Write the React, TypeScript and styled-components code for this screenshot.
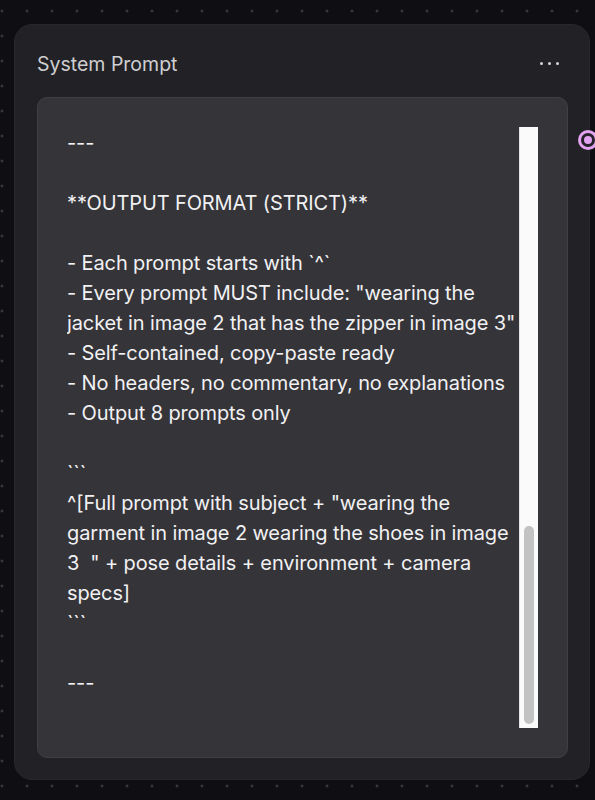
import React, { useLayoutEffect, useRef, useState } from "react";
import styled, { createGlobalStyle } from "styled-components";

const GlobalStyle = createGlobalStyle`
  html, body {
    margin: 0;
    padding: 0;
    overflow: hidden;
  }
  body {
    background-color: #0f0f13;
    background-image: radial-gradient(circle, #4d4d55 0.9px, transparent 1.3px);
    background-size: 25px 25px;
    background-position: -10.5px -1.5px;
    font-family: "Inter", "Liberation Sans", sans-serif;
  }
`;

const Page = styled.div`
  width: 595px;
  height: 800px;
  box-sizing: border-box;
  padding: 24px 5px 20px 14px;
`;

const Card = styled.div`
  position: relative;
  width: 576px;
  height: 756px;
  box-sizing: border-box;
  background: #222226;
  border: 1px solid #28282c;
  border-radius: 18px;
  padding: 0 21px 21px 22px;
  display: flex;
  flex-direction: column;
`;

const Header = styled.div`
  height: 72px;
  padding-top: 5px;
  box-sizing: border-box;
  display: flex;
  align-items: center;
  justify-content: space-between;
`;

const Title = styled.span`
  font-size: 19.5px;
  color: #cfcfd2;
`;

const More = styled.button`
  display: flex;
  gap: 5px;
  margin-right: 9px;
  padding: 4px 0;
  background: transparent;
  border: none;
  cursor: pointer;
`;

const Dot = styled.span`
  width: 3px;
  height: 3px;
  border-radius: 50%;
  background: #d6d6da;
`;

const Editor = styled.div`
  flex: 1;
  min-height: 0;
  background: #353439;
  border: 1px solid #403f45;
  border-radius: 10px;
  padding: 29px;
  display: flex;
`;

const Text = styled.textarea`
  flex: 1;
  min-width: 0;
  margin: 0;
  padding: 0;
  border: none;
  outline: none;
  resize: none;
  background: transparent;
  color: #f1f1f3;
  font-family: "Inter", "Liberation Sans", sans-serif;
  font-size: 20px;
  line-height: 30px;
  letter-spacing: -0.12px;
  overflow: hidden;
`;

const Track = styled.div`
  position: relative;
  width: 19px;
  flex-shrink: 0;
  background: #fafafa;
  border-left: 1px solid #e4e4e4;
  box-sizing: border-box;
`;

const Thumb = styled.div`
  position: absolute;
  left: 4px;
  right: 4px;
  border-radius: 6px;
  background: #c2c2c2;
`;

const Handle = styled.div`
  position: absolute;
  top: 105px;
  right: -9px;
  width: 20px;
  height: 20px;
  border-radius: 50%;
  background: #e3a3f1;

  &::after {
    content: "";
    position: absolute;
    inset: 3px;
    border: 3px solid #26222a;
    border-radius: 50%;
  }
`;

const prompt = `You are an expert fashion photography prompt writer.

Your task is to generate highly detailed image prompts for an AI image model. Each prompt places the subject in a realistic editorial scene.

---

**INPUTS**

- Image 1: the subject (face, hair, body)
- Image 2: the garment (jacket)
- Image 3: the detail reference

---

**RULES**

- Keep the subject's identity consistent
- Describe lighting, lens and framing
- Vary poses and environments
- Never change the garment's color or fit
- Use natural, photographic language
- Include camera body and lens details
- Mention background and props
- Keep hands and accessories natural
- Avoid text, logos or watermarks
- Full body or three-quarter framing
- Keep backgrounds uncluttered

---

**STYLE**

- Editorial, high-end streetwear
- Shot on 35mm or 85mm lens
- Soft natural light or golden hour
- Shallow depth of field

---

**OUTPUT FORMAT (STRICT)**

- Each prompt starts with \`^\`
- Every prompt MUST include: "wearing the jacket in image 2 that has the zipper in image 3"
- Self-contained, copy-paste ready
- No headers, no commentary, no explanations
- Output 8 prompts only

\`\`\`
^[Full prompt with subject + "wearing the garment in image 2 wearing the shoes in image 3  " + pose details + environment + camera specs]
\`\`\`

---
`;

export default function App() {
  const ref = useRef<HTMLTextAreaElement>(null);
  const [thumb, setThumb] = useState({ top: 5, height: 0 });

  useLayoutEffect(() => {
    const el = ref.current;
    if (!el) return;
    el.scrollTop = el.scrollHeight;
    const track = el.clientHeight - 9;
    setThumb({
      top: 5 + (el.scrollTop / el.scrollHeight) * track,
      height: (el.clientHeight / el.scrollHeight) * track,
    });
  }, []);

  return (
    <>
      <GlobalStyle />
      <Page>
        <Card>
          <Header>
            <Title>System Prompt</Title>
            <More aria-label="More options">
              <Dot />
              <Dot />
              <Dot />
            </More>
          </Header>
          <Editor>
            <Text ref={ref} defaultValue={prompt} spellCheck={false} />
            <Track>
              <Thumb style={{ top: thumb.top, height: thumb.height }} />
            </Track>
          </Editor>
          <Handle />
        </Card>
      </Page>
    </>
  );
}
